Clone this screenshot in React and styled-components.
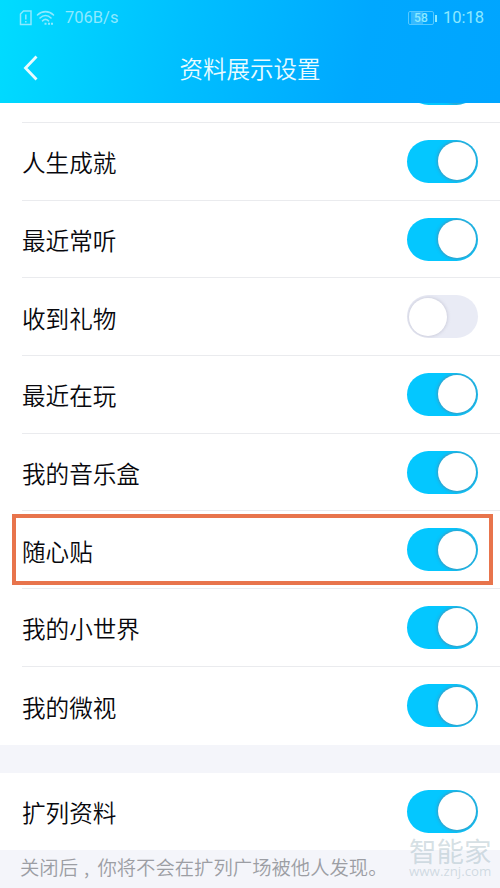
import React from 'react';
import styled, { createGlobalStyle } from 'styled-components';

const GlobalStyle = createGlobalStyle`
  * { box-sizing: border-box; }
  body {
    margin: 0;
    overflow: hidden;
    background: #f4f5fa;
    font-family: "Noto Sans CJK SC", sans-serif;
    font-weight: 350;
  }
`;

const Screen = styled.div`
  width: 500px;
  height: 888px;
  display: flex;
  flex-direction: column;
  overflow: hidden;
  position: relative;
`;

const Header = styled.header`
  flex: none;
  height: 102.5px;
  background: linear-gradient(100deg, #00dcff 0%, #00bfff 37%, #00a8ff 72%, #00a5ff 100%);
  color: #e9fbff;
`;

const StatusBar = styled.div`
  height: 35px;
  padding: 0 16px 0 19px;
  display: flex;
  align-items: center;
  color: #8ce9ff;
  font: 16.5px/35px Roboto, sans-serif;
`;

const StatusIcons = styled.svg`
  width: 36px;
  height: 18px;
  margin-right: 10px;
`;

const Speed = styled.span`
  flex: 1;
`;

const Battery = styled.div`
  width: 26px;
  height: 14px;
  margin-right: 9px;
  border: 1px solid #55c8ff;
  border-radius: 2px;
  background: linear-gradient(90deg, transparent 8%, #35b9ff 8%, #35b9ff 60%, transparent 60%);
  font: 500 12px/12px Roboto, sans-serif;
  text-align: center;
  position: relative;

  &::after {
    content: "";
    position: absolute;
    right: -4px;
    top: 3px;
    width: 2px;
    height: 7px;
    background: #8ce9ff;
  }
`;

const TitleBar = styled.div`
  height: 66px;
  display: grid;
  grid-template-columns: 60px 1fr 60px;
  align-items: center;
`;

const BackIcon = styled.svg`
  width: 16px;
  height: 28px;
  margin-left: 23px;
`;

const Title = styled.h1`
  margin: 0;
  font-size: 23.5px;
  line-height: 34px;
  font-weight: 350;
  text-align: center;
`;

const Viewport = styled.main`
  flex: 1;
  min-height: 0;
  overflow: hidden;
`;

const List = styled.section`
  background: #fff;
  margin-top: ${(p) => p.$offset}px;
`;

const Row = styled.div`
  height: ${(p) => p.$height || 77.7}px;
  margin-left: 22px;
  padding-right: 22px;
  display: flex;
  align-items: center;
  justify-content: space-between;
  border-bottom: ${(p) => (p.$last ? 0 : 1)}px solid #eaebee;
`;

const Label = styled.span`
  color: #08080d;
  font-size: 23.6px;
  line-height: 34px;
  padding-top: 2px;
`;

const Switch = styled.span`
  width: 71px;
  height: 43px;
  padding: 2.5px 2px;
  border-radius: 22px;
  display: flex;
  justify-content: ${(p) => (p.$on ? 'flex-end' : 'flex-start')};
  background: ${(p) => (p.$on ? '#04c7ff' : '#e9ebf5')};
  overflow: hidden;

  &::after {
    content: "";
    width: 38px;
    height: 38px;
    border-radius: 50%;
    background: #fff;
    box-shadow: 0 0 3px 1px ${(p) => (p.$on ? 'rgba(90, 130, 160, 0.65)' : 'rgba(170, 170, 190, 0.4)')};
  }
`;

const Highlight = styled.div`
  position: absolute;
  left: 12px;
  top: 514px;
  width: 481px;
  height: 71px;
  border: 4px solid #e8744c;
`;

const Hint = styled.p`
  margin: 0;
  padding: 1px 0 0 20px;
  width: 385px;
  color: #9c9ea4;
  font-size: 19.35px;
  line-height: 32px;
  white-space: nowrap;
`;

const Comma = styled.span`
  display: inline-block;
  width: 1em;
  text-indent: 6px;
`;

const Watermark = styled.div`
  position: absolute;
  left: 409px;
  top: 836px;
  width: 84px;
  color: rgba(155, 180, 190, 0.42);
`;

const WatermarkLogo = styled.div`
  font-size: 27.5px;
  font-weight: 400;
  line-height: 28px;
  height: 27px;
  white-space: nowrap;
`;

const WatermarkUrl = styled.div`
  font: 13.3px/17px "Open Sans", sans-serif;
  white-space: nowrap;
`;

const items = [
  ['', true],
  ['人生成就', true],
  ['最近常听', true],
  ['收到礼物', false],
  ['最近在玩', true],
  ['我的音乐盒', true],
  ['随心贴', true],
  ['我的小世界', true],
  ['我的微视', true],
];

export default function App() {
  return (
    <>
      <GlobalStyle />
      <Screen>
        <Header>
          <StatusBar>
            <StatusIcons viewBox="0 0 36 18" fill="none" stroke="currentColor" strokeWidth="1.5">
              <path d="M4.500 2H12v13.500H1.500V5z" />
              <path d="M6.800 5.500v5M6.800 12v1.500" />
              <path d="M18.500 6c4.500-4.500 11.500-4.500 16 0M21 9c3.300-3.200 7.700-3.200 11 0M23.500 11.800c1.800-1.700 4.200-1.700 6 0" strokeLinecap="round" strokeWidth="1.600" />
              <path d="M25.500 14.800h2M29 14.800h2M32 14.800h2" strokeWidth="2" />
            </StatusIcons>
            <Speed>706B/s</Speed>
            <Battery>58</Battery>
            <span>10:18</span>
          </StatusBar>
          <TitleBar>
            <BackIcon viewBox="0 0 16 28" fill="none" stroke="currentColor" strokeWidth="2.8">
              <path d="M13.500 2.500L2.500 14l11 11.500" />
            </BackIcon>
            <Title>资料展示设置</Title>
          </TitleBar>
        </Header>
        <Viewport>
          <List $offset={-57.2}>
            {items.map(([label, on], i) => (
              <Row key={i} $last={i === items.length - 1}>
                <Label>{label}</Label>
                <Switch $on={on} />
              </Row>
            ))}
          </List>
          <List $offset={28}>
            <Row $last $height={77.5}>
              <Label>扩列资料</Label>
              <Switch $on />
            </Row>
          </List>
          <Hint>关闭后<Comma>,</Comma>你将不会在扩列广场被他人发现。</Hint>
        </Viewport>
        <Highlight />
        <Watermark>
          <WatermarkLogo>智能家</WatermarkLogo>
          <WatermarkUrl>www.znj.com</WatermarkUrl>
        </Watermark>
      </Screen>
    </>
  );
}
